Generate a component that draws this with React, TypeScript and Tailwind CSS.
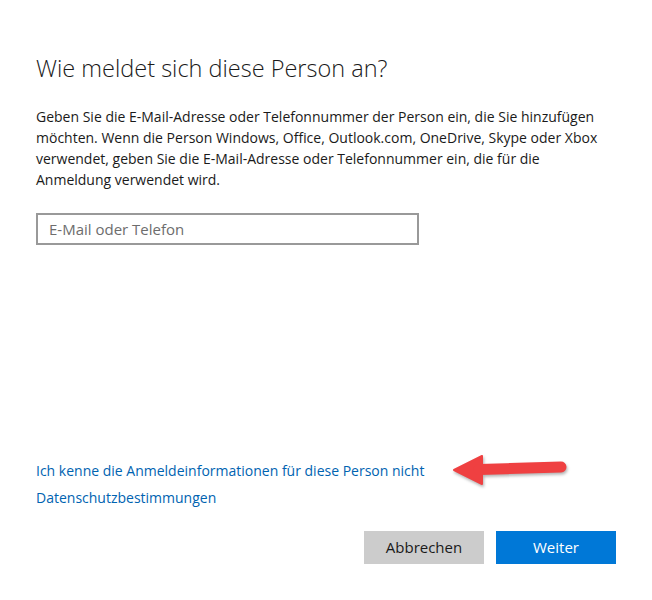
export default function App() {
  return (
    <div
      className="w-[652px] h-[600px] bg-white flex flex-col px-9 pt-[52px] pb-[36px] text-[#000]"
      style={{ fontFamily: '"Open Sans", "Noto Sans", sans-serif' }}
    >
      {/* Heading */}
      <h1 className="text-[23.5px] font-light leading-8 text-[#1a1a1a]">
        Wie meldet sich diese Person an?
      </h1>

      <p className="mt-[22px] w-[572px] text-[14px] leading-[21px] text-[#1a1a1a]">
        Geben Sie die E-Mail-Adresse oder Telefonnummer der Person ein, die Sie hinzufügen möchten. Wenn die Person
        Windows, Office, Outlook.com, OneDrive, Skype oder Xbox verwendet, geben Sie die E-Mail-Adresse oder
        Telefonnummer ein, die für die Anmeldung verwendet wird.
      </p>

      <input
        type="text"
        placeholder="E-Mail oder Telefon"
        className="mt-[23px] w-[383px] h-[32px] border-2 border-[#999999] px-[11px] text-[15px] text-[#1a1a1a] placeholder:text-[#6d6d6d] outline-none"
      />

      {/* Links */}
      <div className="mt-auto flex flex-col gap-[7px] text-[14px] text-[#0063b1]">
        <div className="relative">
          <a href="#" className="leading-[20px]">
            Ich kenne die Anmeldeinformationen für diese Person nicht
          </a>
          {/* red annotation arrow */}
          <svg
            width="116"
            height="34"
            viewBox="0 0 116 34"
            className="absolute left-[416px] top-[-7px] drop-shadow-[1px_2px_1.5px_rgba(0,0,0,0.3)]"
          >
            <path d="M2 17 L30 3 L30 31 Z" fill="#ef4041" strokeLinejoin="round" stroke="#ef4041" strokeWidth="2" />
            <line x1="27" y1="16.5" x2="109" y2="14" stroke="#ef4041" strokeWidth="11" strokeLinecap="round" />
          </svg>
        </div>
        <a href="#" className="leading-[20px]">
          Datenschutzbestimmungen
        </a>
      </div>

      {/* Buttons */}
      <div className="mt-[23px] flex justify-end gap-3">
        <button className="w-[120px] h-[33px] bg-[#cccccc] text-[15px] text-[#1a1a1a]">Abbrechen</button>
        <button className="w-[120px] h-[33px] bg-[#0078d7] text-[15px] text-white">Weiter</button>
      </div>
    </div>
  );
}
